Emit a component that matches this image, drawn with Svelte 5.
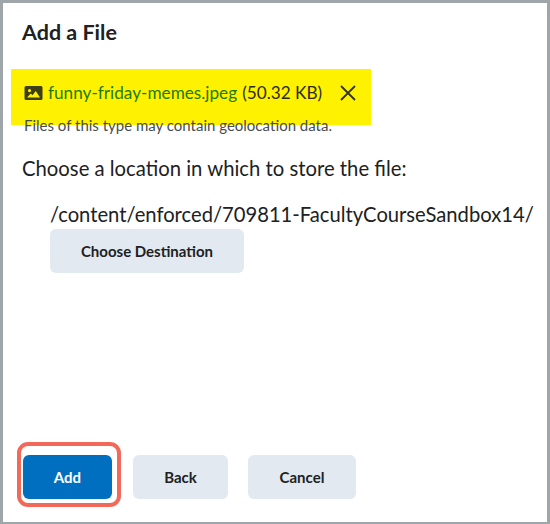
<script lang="ts">
  const fileName = "funny-friday-memes.jpeg";
  const fileSize = "(50.32 KB)";
  const path = "/content/enforced/709811-FacultyCourseSandbox14/";
</script>

<div class="dialog">
  <h2>Add a File</h2>

  <div class="highlight">
    <div class="file-row">
      <svg class="file-icon" viewBox="0 0 18 14" width="19" height="14" aria-hidden="true">
        <path
          fill-rule="evenodd"
          d="M1.5 0h15A1.5 1.5 0 0 1 18 1.5v11a1.5 1.5 0 0 1-1.5 1.5h-15A1.5 1.5 0 0 1 0 12.500v-11A1.500 1.500 0 0 1 1.500 0zM5 3a1.600 1.600 0 1 0 0 3.200A1.600 1.600 0 0 0 5 3zM2.500 11.500h13L11.200 5 8 9.300 6.300 7.500z"
        />
      </svg>
      <span class="file-name">{fileName}</span>
      <span class="file-size">{fileSize}</span>
      <svg class="remove" viewBox="0 0 16 16" width="16" height="16" aria-hidden="true">
        <path d="M1 1l14 14M15 1L1 15" />
      </svg>
    </div>
  </div>
  <p class="note">Files of this type may contain geolocation data.</p>

  <p class="prompt">Choose a location in which to store the file:</p>

  <div class="destination">
    <div class="path">{path}</div>
    <button class="btn choose" type="button">Choose Destination</button>
  </div>

  <div class="footer">
    <div class="add-wrap">
      <button class="btn primary" type="button">Add</button>
      <span class="ring"></span>
    </div>
    <button class="btn back" type="button">Back</button>
    <button class="btn cancel" type="button">Cancel</button>
  </div>
</div>

<style>
  :global(body) {
    margin: 0;
    background: #fff;
  }

  .dialog {
    box-sizing: border-box;
    width: 550px;
    height: 524px;
    display: flex;
    flex-direction: column;
    padding: 0 0 0 19px;
    border: 3px solid #9ea6aa;
    border-bottom-width: 2px;
    font-family: Lato, "Liberation Sans", sans-serif;
    color: #202122;
    background: #fff;
  }

  h2 {
    margin: 17px 0 0;
    font-size: 21.5px;
    line-height: 24px;
    font-weight: 700;
  }

  .highlight {
    width: 360px;
    height: 56px;
    margin: 25px 0 0 -11px;
    background: #fff200;
    box-sizing: border-box;
    padding: 14px 0 0 13px;
  }

  .file-row {
    display: flex;
    align-items: center;
    height: 20px;
    font-size: 17.2px;
    line-height: 20px;
    white-space: nowrap;
  }

  .file-icon {
    fill: #3d3f12;
    margin-right: 5px;
  }

  .file-name {
    color: #1d7a0c;
    margin-right: 5px;
  }

  .file-size {
    color: #2b2c14;
  }

  .remove {
    margin-left: 18px;
    fill: none;
    stroke: #33341a;
    stroke-width: 1.800;
  }

  .note {
    margin: -8px 0 0 2px;
    font-size: 15px;
    line-height: 16px;
    color: #494c4e;
    position: relative;
  }

  .prompt {
    margin: 23px 0 0;
    font-size: 20.3px;
    line-height: 24px;
  }

  .destination {
    margin: 22px 0 0 28px;
  }

  .path {
    font-size: 20.2px;
    line-height: 24px;
    white-space: nowrap;
  }

  .btn {
    display: block;
    height: 44px;
    padding: 0;
    border: none;
    border-radius: 6px;
    background: #e3e9f1;
    color: #202122;
    font-family: inherit;
    font-size: 15px;
    font-weight: 700;
  }

  .choose {
    width: 194px;
    margin-top: 3px;
  }

  .footer {
    margin-top: auto;
    margin-bottom: 23px;
    display: flex;
    align-items: center;
  }

  .add-wrap {
    position: relative;
    margin-left: 1px;
  }

  /* red annotation drawn over the screenshot */
  .ring {
    position: absolute;
    left: -6px;
    top: -13px;
    width: 104px;
    height: 65px;
    box-sizing: border-box;
    border: 4px solid #f2695a;
    border-radius: 11px;
  }

  .primary {
    width: 89px;
    background: #006fbf;
    color: #fff;
  }

  .back {
    width: 95px;
    margin-left: 21px;
  }

  .cancel {
    width: 108px;
    margin-left: 20px;
  }
</style>
